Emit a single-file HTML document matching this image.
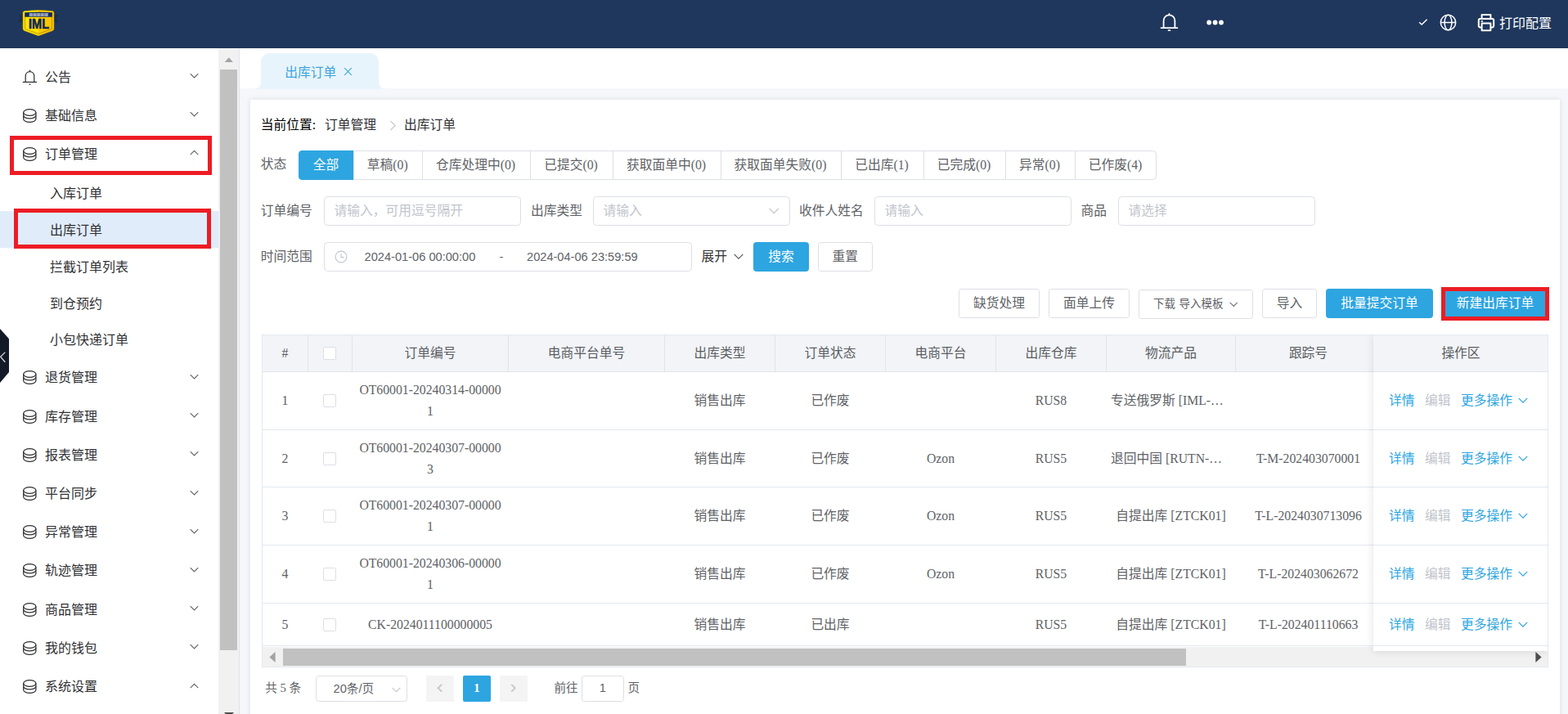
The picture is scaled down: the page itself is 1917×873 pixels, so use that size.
<!DOCTYPE html>
<html lang="zh-CN">
<head>
<meta charset="utf-8">
<title>出库订单</title>
<style>
*{box-sizing:border-box;margin:0;padding:0}
html,body{width:1917px;height:873px;overflow:hidden;background:#f5f7fa}
body{position:relative;font-family:"Liberation Serif",sans-serif;font-size:16px;color:#303133}
.abs{position:absolute}
.sans{font-family:"Liberation Sans",sans-serif}
/* header */
#hdr{left:0;top:0;width:1917px;height:59px;background:#1f375d}
#hdr .t{color:#fff;font-size:16px;line-height:20px;margin-top:1.5px;white-space:nowrap}
/* sidebar */
#side{left:0;top:59px;width:267px;height:814px;background:#fff}
.mi{position:absolute;left:0;width:267px;height:47.2px;line-height:47.2px;font-size:16px;color:#303133;white-space:nowrap}
.mi .ic{position:absolute;left:27px;top:14px;width:19px;height:19px}
.mi .tx{position:absolute;left:55px;top:0}
.mi .ar{position:absolute;left:232px;top:18.5px;width:11px;height:7.4px}
.smi{position:absolute;left:0;width:267px;height:44.75px;line-height:47.75px;font-size:16px;color:#303133;padding-left:61px;white-space:nowrap}
.smi.on{background:#e1ecfb}
.red{position:absolute;border:5px solid #ed1c24}
/* scrollbar */
#sb{left:267px;top:60px;width:26px;height:813px;background:#f1f1f1;border-right:1px solid #dde2ec}
/* main */
#tabs{left:293px;top:59px;width:1624px;height:49px;background:#fff}
#tab{left:319px;top:65px;width:143.5px;height:43.5px;background:#e8f4fc;border-radius:11px 11px 0 0;color:#3aa5dd;font-size:15.75px;line-height:44px;white-space:nowrap}
#card{left:306px;top:122px;width:1601px;height:760px;background:#fff;box-shadow:0 0 7px rgba(0,0,0,.10)}
.lbl{position:absolute;font-size:15.75px;line-height:20px;color:#303133;white-space:nowrap}
.inp{position:absolute;height:36px;border:1px solid #dcdfe6;border-radius:4.5px;background:#fff;font-size:15.75px;line-height:34px;color:#c0c4cc;padding-left:11.5px;white-space:nowrap}
.btn{position:absolute;height:36px;border:1px solid #dcdfe6;border-radius:3.4px;background:#fff;font-size:15.75px;line-height:34px;color:#606266;text-align:center;white-space:nowrap}
.btn.pri{background:#2da5e0;border-color:#2da5e0;color:#fff}
/* status group */
#sg{left:365px;top:184px;height:36px;width:1049px}
#sg div{position:absolute;top:0;height:36px;line-height:34.5px;font-size:15.75px;color:#606266;border:1px solid #dcdfe6;border-right:none;background:#fff;text-align:center;white-space:nowrap;padding-right:1px}
#sg div:first-child{border-color:#2da5e0;background:#2da5e0;color:#fff;border-radius:4.5px 0 0 4.5px}
#sg div:last-child{border-right:1px solid #dcdfe6;border-radius:0 4.5px 4.5px 0;padding-right:0}
/* table */
#tbl{left:320px;top:409px;width:1573px;height:407px;background:#fff;overflow:hidden;border:1px solid #e3e8f0}
.th{position:absolute;top:0;height:45px;line-height:44px;background:#f2f4f7;color:#5a5d63;font-size:15.75px;text-align:center;border-right:1px solid #dfe4ed;border-bottom:1px solid #dfe4ed;white-space:nowrap}
.tr{position:absolute;left:0;width:1573px;border-bottom:1px solid #e1e8f1}
.td{position:absolute;top:0;height:100%;display:flex;align-items:center;justify-content:center;text-align:center;color:#606266;font-size:15.75px;line-height:25.9px;white-space:nowrap}
.cb{display:block;position:relative;left:-1px;width:16px;height:16px;border:1px solid #dcdfe6;border-radius:2px;background:#fff}
.lnk{color:#2da5e0}.dis{color:#c0c4cc}
#fix{left:1358px;top:0;width:214px;height:386px;background:#fff;box-shadow:0 0 10px rgba(0,0,0,.12);z-index:2}
.pg{position:absolute;top:826px;height:32px;font-size:14.625px;line-height:31px;color:#606266;white-space:nowrap}
.c{display:inline-block;white-space:nowrap;vertical-align:baseline;font-family:"Liberation Sans","Noto Sans CJK SC",sans-serif}
</style>
</head>
<body>
<div id="hdr" class="abs">
<svg class="abs" style="left:20px;top:8px" width="54" height="40" viewBox="0 0 54 40">
<defs><linearGradient id="lg" x1="0" x2="1" y1="0" y2="0"><stop offset="0" stop-color="#ffe500"/><stop offset=".5" stop-color="#ffe200"/><stop offset=".5" stop-color="#ffcb05"/><stop offset="1" stop-color="#fdc400"/></linearGradient></defs>
<path d="M3 9.9 L8 9.9 L8 18.9 L3 18.9 L5 14.4 Z" fill="#182c52"/>
<path d="M51 9.9 L46 9.9 L46 18.9 L51 18.9 L49 14.4 Z" fill="#182c52"/>
<path d="M10 5.6 Q27 3.6 44 5.6 Q45.9 5.9 45.9 7.8 L45.9 27 Q45.9 28.8 44.2 29.5 L27 35.7 L9.8 29.5 Q8.1 28.8 8.1 27 L8.1 7.8 Q8.1 5.9 10 5.6 Z" fill="url(#lg)" stroke="#e3b000" stroke-width=".6"/>
<path d="M10.6 12.7 L10.6 27.4 L27 33.3 L43.4 27.4 L43.4 12.7" fill="none" stroke="#7a6200" stroke-width=".7" opacity=".75"/>
<path d="M10.2 7.3 Q27 6.2 43.9 7.3 L43.9 12.8 L10.2 12.8 Z" fill="#132957"/>
<rect x="15.8" y="8.2" width="23" height="3.6" fill="#e9ecf4" opacity=".8"/>
<path d="M20.3 8 v4 M24.9 8 v4 M29.4 8 v4 M34 8 v4 M16 10 h23" stroke="#132957" stroke-width=".7" opacity=".7"/>
<text x="15" y="26.9" font-family="Liberation Sans, sans-serif" font-weight="700" font-size="16.7" fill="#0e2553" stroke="#0e2553" stroke-width=".6" textLength="25" lengthAdjust="spacingAndGlyphs">IML</text>
</svg>
<svg class="abs" style="left:1417px;top:15px" width="25" height="25" viewBox="0 0 25 25" fill="none" stroke="#fff" stroke-width="1.8" stroke-linecap="round" stroke-linejoin="round">
<path d="M5.6 19 L5.6 10.4 C5.6 6.2 8.6 3.4 12.5 3.4 C16.4 3.4 19.4 6.2 19.4 10.4 L19.4 19"/>
<path d="M2.6 19.2 L22.4 19.2"/>
<path d="M12.5 2 L12.5 3.2"/>
<path d="M11.6 22.2 L13.4 22.2"/>
</svg>
<svg class="abs" style="left:1474px;top:23px" width="24" height="9" viewBox="0 0 24 9" fill="#fff">
<circle cx="4.2" cy="4.5" r="2.9"/><circle cx="11.6" cy="4.5" r="2.9"/><circle cx="19" cy="4.5" r="2.9"/>
</svg>
<svg class="abs" style="left:1734px;top:22px" width="12" height="10" viewBox="0 0 12 10" fill="none" stroke="#fff" stroke-width="1.5">
<path d="M1.2 5.2 L4.2 8 L10.6 1.8"/>
</svg>
<svg class="abs" style="left:1759px;top:16px" width="23" height="23" viewBox="0 0 23 23" fill="none" stroke="#fff" stroke-width="1.5">
<circle cx="11.5" cy="11.5" r="9.2"/>
<ellipse cx="11.5" cy="11.5" rx="4.4" ry="9.2"/>
<path d="M2.3 11.5 L20.7 11.5"/>
</svg>
<svg class="abs" style="left:1805px;top:15px" width="24" height="25" viewBox="0 0 24 25" fill="none" stroke="#fff" stroke-width="2" stroke-linejoin="round">
<path d="M6.6 8 L6.6 3 L17.4 3 L17.4 8"/>
<path d="M6.4 18.4 L4.6 18.4 Q2.8 18.4 2.8 16.6 L2.8 9.8 Q2.8 8 4.6 8 L19.4 8 Q21.2 8 21.2 9.8 L21.2 16.6 Q21.2 18.4 19.4 18.4 L17.6 18.4"/>
<rect x="6.6" y="13.6" width="10.8" height="8.6"/>
<path d="M5.6 11 L8 11" stroke-width="1.6"/>
</svg>
<div class="abs t" style="left:1833px;top:17px"><span class="c" style="width:4em">打印配置</span></div>
</div>
<div id="side" class="abs">
<div class="mi" style="top:11.8px"><svg class="ic" viewBox="0 0 19 19" fill="none" stroke="#303133" stroke-width="1.25" stroke-linecap="round"><path d="M4.2 15.2 L4.2 8.2 C4.2 4.8 6.5 2.6 9.5 2.6 C12.5 2.6 14.8 4.8 14.8 8.2 L14.8 15.2"/><path d="M1.4 15.4 L17.6 15.4"/><path d="M9.5 1.2 L9.5 2.4"/><path d="M8.9 18 L10.1 18"/></svg><span class="tx"><span class="c" style="width:2em">公告</span></span><svg class="ar" viewBox="0 0 12 8" fill="none" stroke="#606266" stroke-width="1.2"><path d="M0.8 1.2 L6 6.4 L11.2 1.2"/></svg></div>
<div class="mi" style="top:58.8px"><svg class="ic" viewBox="0 0 19 19" fill="none" stroke="#303133" stroke-width="1.25"><ellipse cx="9.3" cy="5.5" rx="7.6" ry="3.9"/><path d="M1.7 5.5 L1.7 9.2 C1.7 11.3 5.1 12.9 9.3 12.9 C13.5 12.9 16.9 11.3 16.9 9.2 L16.9 5.5"/><path d="M1.7 9.2 L1.7 13.5 C1.7 15.6 5.1 17.3 9.3 17.3 C13.5 17.3 16.9 15.6 16.9 13.5 L16.9 9.2"/></svg><span class="tx"><span class="c" style="width:4em">基础信息</span></span><svg class="ar" viewBox="0 0 12 8" fill="none" stroke="#606266" stroke-width="1.2"><path d="M0.8 1.2 L6 6.4 L11.2 1.2"/></svg></div>
<div class="mi" style="top:105.6px"><svg class="ic" viewBox="0 0 19 19" fill="none" stroke="#303133" stroke-width="1.25"><ellipse cx="9.3" cy="5.5" rx="7.6" ry="3.9"/><path d="M1.7 5.5 L1.7 9.2 C1.7 11.3 5.1 12.9 9.3 12.9 C13.5 12.9 16.9 11.3 16.9 9.2 L16.9 5.5"/><path d="M1.7 9.2 L1.7 13.5 C1.7 15.6 5.1 17.3 9.3 17.3 C13.5 17.3 16.9 15.6 16.9 13.5 L16.9 9.2"/></svg><span class="tx"><span class="c" style="width:4em">订单管理</span></span><svg class="ar" viewBox="0 0 12 8" fill="none" stroke="#606266" stroke-width="1.2"><path d="M0.8 6.6 L6 1.4 L11.2 6.6"/></svg></div>
<div class="mi" style="top:379.4px"><svg class="ic" viewBox="0 0 19 19" fill="none" stroke="#303133" stroke-width="1.25"><ellipse cx="9.3" cy="5.5" rx="7.6" ry="3.9"/><path d="M1.7 5.5 L1.7 9.2 C1.7 11.3 5.1 12.9 9.3 12.9 C13.5 12.9 16.9 11.3 16.9 9.2 L16.9 5.5"/><path d="M1.7 9.2 L1.7 13.5 C1.7 15.6 5.1 17.3 9.3 17.3 C13.5 17.3 16.9 15.6 16.9 13.5 L16.9 9.2"/></svg><span class="tx"><span class="c" style="width:4em">退货管理</span></span><svg class="ar" viewBox="0 0 12 8" fill="none" stroke="#606266" stroke-width="1.2"><path d="M0.8 1.2 L6 6.4 L11.2 1.2"/></svg></div>
<div class="mi" style="top:426.6px"><svg class="ic" viewBox="0 0 19 19" fill="none" stroke="#303133" stroke-width="1.25"><ellipse cx="9.3" cy="5.5" rx="7.6" ry="3.9"/><path d="M1.7 5.5 L1.7 9.2 C1.7 11.3 5.1 12.9 9.3 12.9 C13.5 12.9 16.9 11.3 16.9 9.2 L16.9 5.5"/><path d="M1.7 9.2 L1.7 13.5 C1.7 15.6 5.1 17.3 9.3 17.3 C13.5 17.3 16.9 15.6 16.9 13.5 L16.9 9.2"/></svg><span class="tx"><span class="c" style="width:4em">库存管理</span></span><svg class="ar" viewBox="0 0 12 8" fill="none" stroke="#606266" stroke-width="1.2"><path d="M0.8 1.2 L6 6.4 L11.2 1.2"/></svg></div>
<div class="mi" style="top:473.8px"><svg class="ic" viewBox="0 0 19 19" fill="none" stroke="#303133" stroke-width="1.25"><ellipse cx="9.3" cy="5.5" rx="7.6" ry="3.9"/><path d="M1.7 5.5 L1.7 9.2 C1.7 11.3 5.1 12.9 9.3 12.9 C13.5 12.9 16.9 11.3 16.9 9.2 L16.9 5.5"/><path d="M1.7 9.2 L1.7 13.5 C1.7 15.6 5.1 17.3 9.3 17.3 C13.5 17.3 16.9 15.6 16.9 13.5 L16.9 9.2"/></svg><span class="tx"><span class="c" style="width:4em">报表管理</span></span><svg class="ar" viewBox="0 0 12 8" fill="none" stroke="#606266" stroke-width="1.2"><path d="M0.8 1.2 L6 6.4 L11.2 1.2"/></svg></div>
<div class="mi" style="top:521.0px"><svg class="ic" viewBox="0 0 19 19" fill="none" stroke="#303133" stroke-width="1.25"><ellipse cx="9.3" cy="5.5" rx="7.6" ry="3.9"/><path d="M1.7 5.5 L1.7 9.2 C1.7 11.3 5.1 12.9 9.3 12.9 C13.5 12.9 16.9 11.3 16.9 9.2 L16.9 5.5"/><path d="M1.7 9.2 L1.7 13.5 C1.7 15.6 5.1 17.3 9.3 17.3 C13.5 17.3 16.9 15.6 16.9 13.5 L16.9 9.2"/></svg><span class="tx"><span class="c" style="width:4em">平台同步</span></span><svg class="ar" viewBox="0 0 12 8" fill="none" stroke="#606266" stroke-width="1.2"><path d="M0.8 1.2 L6 6.4 L11.2 1.2"/></svg></div>
<div class="mi" style="top:568.2px"><svg class="ic" viewBox="0 0 19 19" fill="none" stroke="#303133" stroke-width="1.25"><ellipse cx="9.3" cy="5.5" rx="7.6" ry="3.9"/><path d="M1.7 5.5 L1.7 9.2 C1.7 11.3 5.1 12.9 9.3 12.9 C13.5 12.9 16.9 11.3 16.9 9.2 L16.9 5.5"/><path d="M1.7 9.2 L1.7 13.5 C1.7 15.6 5.1 17.3 9.3 17.3 C13.5 17.3 16.9 15.6 16.9 13.5 L16.9 9.2"/></svg><span class="tx"><span class="c" style="width:4em">异常管理</span></span><svg class="ar" viewBox="0 0 12 8" fill="none" stroke="#606266" stroke-width="1.2"><path d="M0.8 1.2 L6 6.4 L11.2 1.2"/></svg></div>
<div class="mi" style="top:615.4px"><svg class="ic" viewBox="0 0 19 19" fill="none" stroke="#303133" stroke-width="1.25"><ellipse cx="9.3" cy="5.5" rx="7.6" ry="3.9"/><path d="M1.7 5.5 L1.7 9.2 C1.7 11.3 5.1 12.9 9.3 12.9 C13.5 12.9 16.9 11.3 16.9 9.2 L16.9 5.5"/><path d="M1.7 9.2 L1.7 13.5 C1.7 15.6 5.1 17.3 9.3 17.3 C13.5 17.3 16.9 15.6 16.9 13.5 L16.9 9.2"/></svg><span class="tx"><span class="c" style="width:4em">轨迹管理</span></span><svg class="ar" viewBox="0 0 12 8" fill="none" stroke="#606266" stroke-width="1.2"><path d="M0.8 1.2 L6 6.4 L11.2 1.2"/></svg></div>
<div class="mi" style="top:662.6px"><svg class="ic" viewBox="0 0 19 19" fill="none" stroke="#303133" stroke-width="1.25"><ellipse cx="9.3" cy="5.5" rx="7.6" ry="3.9"/><path d="M1.7 5.5 L1.7 9.2 C1.7 11.3 5.1 12.9 9.3 12.9 C13.5 12.9 16.9 11.3 16.9 9.2 L16.9 5.5"/><path d="M1.7 9.2 L1.7 13.5 C1.7 15.6 5.1 17.3 9.3 17.3 C13.5 17.3 16.9 15.6 16.9 13.5 L16.9 9.2"/></svg><span class="tx"><span class="c" style="width:4em">商品管理</span></span><svg class="ar" viewBox="0 0 12 8" fill="none" stroke="#606266" stroke-width="1.2"><path d="M0.8 1.2 L6 6.4 L11.2 1.2"/></svg></div>
<div class="mi" style="top:709.8px"><svg class="ic" viewBox="0 0 19 19" fill="none" stroke="#303133" stroke-width="1.25"><ellipse cx="9.3" cy="5.5" rx="7.6" ry="3.9"/><path d="M1.7 5.5 L1.7 9.2 C1.7 11.3 5.1 12.9 9.3 12.9 C13.5 12.9 16.9 11.3 16.9 9.2 L16.9 5.5"/><path d="M1.7 9.2 L1.7 13.5 C1.7 15.6 5.1 17.3 9.3 17.3 C13.5 17.3 16.9 15.6 16.9 13.5 L16.9 9.2"/></svg><span class="tx"><span class="c" style="width:4em">我的钱包</span></span><svg class="ar" viewBox="0 0 12 8" fill="none" stroke="#606266" stroke-width="1.2"><path d="M0.8 1.2 L6 6.4 L11.2 1.2"/></svg></div>
<div class="mi" style="top:757.0px"><svg class="ic" viewBox="0 0 19 19" fill="none" stroke="#303133" stroke-width="1.25"><ellipse cx="9.3" cy="5.5" rx="7.6" ry="3.9"/><path d="M1.7 5.5 L1.7 9.2 C1.7 11.3 5.1 12.9 9.3 12.9 C13.5 12.9 16.9 11.3 16.9 9.2 L16.9 5.5"/><path d="M1.7 9.2 L1.7 13.5 C1.7 15.6 5.1 17.3 9.3 17.3 C13.5 17.3 16.9 15.6 16.9 13.5 L16.9 9.2"/></svg><span class="tx"><span class="c" style="width:4em">系统设置</span></span><svg class="ar" viewBox="0 0 12 8" fill="none" stroke="#606266" stroke-width="1.2"><path d="M0.8 6.6 L6 1.4 L11.2 6.6"/></svg></div>
<div class="smi" style="top:154.4px"><span class="c" style="width:4em">入库订单</span></div>
<div class="smi on" style="top:199.2px"><span class="c" style="width:4em">出库订单</span></div>
<div class="smi" style="top:243.9px"><span class="c" style="width:6em">拦截订单列表</span></div>
<div class="smi" style="top:288.7px"><span class="c" style="width:4em">到仓预约</span></div>
<div class="smi" style="top:333.4px"><span class="c" style="width:6em">小包快递订单</span></div>
<div class="red" style="left:12px;top:107px;width:247px;height:48px"></div>
<div class="red" style="left:17px;top:196px;width:241px;height:49px"></div>
<svg class="abs" style="left:0;top:342px" width="12" height="70" viewBox="0 0 12 70"><path d="M0 1 L11 13.3 L11 54.1 L0 66.9 Z" fill="#131a27"/><path d="M6.3 29.6 L0.6 35.3 L6.3 41.8" fill="none" stroke="#d6d9df" stroke-width="1.3"/></svg>
</div>
<div id="sb" class="abs">
<svg class="abs" style="left:6.7px;top:9.8px" width="11.6" height="6.4" viewBox="0 0 12 7"><path d="M0 7 L6 0.4 L12 7 Z" fill="#a3a3a3"/></svg>
<div class="abs" style="left:2px;top:25px;width:21px;height:710px;background:#c1c1c1"></div>
<svg class="abs" style="left:6.5px;top:811px" width="12" height="7" viewBox="0 0 12 7"><path d="M0 0 L6 6.6 L12 0 Z" fill="#505050"/></svg>
</div>
<div id="tabs" class="abs"></div>
<div id="tab" class="abs"><span class="abs" style="left:29.2px;top:1.5px"><span class="c" style="width:4em">出库订单</span></span>
<svg class="abs" style="left:100.5px;top:17px" width="11" height="11" viewBox="0 0 11 11" fill="none" stroke="#3aa5dd" stroke-width="1.1"><path d="M1.2 1.2 L9.8 9.8 M9.8 1.2 L1.2 9.8"/></svg>
<svg class="abs" style="left:-9px;top:33.5px" width="9" height="10" viewBox="0 0 9 10"><path d="M9 0 L9 10 L0 10 C6 9.6 9 6.5 9 0 Z" fill="#e8f4fc"/></svg>
<svg class="abs" style="left:143.5px;top:33.5px" width="9" height="10" viewBox="0 0 9 10"><path d="M0 0 L0 10 L9 10 C3 9.6 0 6.5 0 0 Z" fill="#e8f4fc"/></svg>
</div>
<div id="card" class="abs"></div>
<div class="lbl" style="left:318.8px;top:143px;color:#000"><span class="c" style="width:4em">当前位置</span>:</div>
<div class="lbl" style="left:397px;top:143px;color:#303133"><span class="c" style="width:4em">订单管理</span></div>
<svg class="abs" style="left:476px;top:146.5px" width="9" height="13" viewBox="0 0 9 13" fill="none" stroke="#c0c4cc" stroke-width="1.1"><path d="M1.4 0.8 L7.2 6.5 L1.4 12.2"/></svg>
<div class="lbl" style="left:494px;top:143px;color:#303133"><span class="c" style="width:4em">出库订单</span></div>
<div class="lbl" style="left:318.8px;top:191px;color:#606266"><span class="c" style="width:2em">状态</span></div>
<div id="sg" class="abs"><div style="left:0.0px;width:67.0px"><span class="c" style="width:2em">全部</span></div><div style="left:67.0px;width:83.5px"><span class="c" style="width:2em">草稿</span>(0)</div><div style="left:150.5px;width:132.0px"><span class="c" style="width:5em">仓库处理中</span>(0)</div><div style="left:282.5px;width:101.0px"><span class="c" style="width:3em">已提交</span>(0)</div><div style="left:383.5px;width:132.0px"><span class="c" style="width:5em">获取面单中</span>(0)</div><div style="left:515.5px;width:147.0px"><span class="c" style="width:6em">获取面单失败</span>(0)</div><div style="left:662.5px;width:101.0px"><span class="c" style="width:3em">已出库</span>(1)</div><div style="left:763.5px;width:100.0px"><span class="c" style="width:3em">已完成</span>(0)</div><div style="left:863.5px;width:85.0px"><span class="c" style="width:2em">异常</span>(0)</div><div style="left:948.5px;width:100.0px"><span class="c" style="width:3em">已作废</span>(4)</div></div>
<div class="lbl" style="left:318.8px;top:247.5px;color:#606266"><span class="c" style="width:4em">订单编号</span></div>
<div class="lbl" style="left:649px;top:247.5px;color:#606266"><span class="c" style="width:4em">出库类型</span></div>
<div class="lbl" style="left:977px;top:247.5px;color:#606266"><span class="c" style="width:5em">收件人姓名</span></div>
<div class="lbl" style="left:1321.5px;top:247.5px;color:#606266"><span class="c" style="width:2em">商品</span></div>
<div class="inp" style="left:396px;top:240px;width:240.6px"><span class="c" style="width:10em">请输入，可用逗号隔开</span></div>
<div class="inp" style="left:725px;top:240px;width:240.8px"><span class="c" style="width:3em">请输入</span></div>
<div class="inp" style="left:1069px;top:240px;width:240.5px"><span class="c" style="width:3em">请输入</span></div>
<div class="inp" style="left:1367px;top:240px;width:240.5px"><span class="c" style="width:3em">请选择</span></div>
<div class="abs" style="left:940px;top:254px;line-height:0"><svg width="12.5" height="8" viewBox="0 0 11 7" fill="none" stroke="#c0c4cc" stroke-width="1.1"><path d="M0.6 0.8 L5.5 5.8 L10.4 0.8"/></svg></div>
<div class="lbl" style="left:318.8px;top:303.5px;color:#606266"><span class="c" style="width:4em">时间范围</span></div>
<div class="inp sans" style="left:396px;top:296px;width:449.5px;padding:0;color:#606266;font-size:14.625px">
<svg class="abs" style="left:11.5px;top:9.3px" width="16" height="16" viewBox="0 0 16 16" fill="none" stroke="#c0c4cc" stroke-width="1.1"><circle cx="8" cy="8" r="6.9"/><path d="M8 4.2 L8 8.6 L11.6 8.6"/></svg>
<span class="abs" style="left:48.6px;top:0">2024-01-06 00:00:00</span>
<span class="abs" style="left:213.5px;top:0">-</span>
<span class="abs" style="left:247px;top:0">2024-04-06 23:59:59</span>
</div>
<div class="lbl" style="left:857.5px;top:303.5px;color:#303133"><span class="c" style="width:2em">展开</span></div>
<div class="abs" style="left:896.5px;top:310px;line-height:0"><svg width="12" height="7.6" viewBox="0 0 11 7" fill="none" stroke="#45484f" stroke-width="1"><path d="M0.6 0.8 L5.5 5.8 L10.4 0.8"/></svg></div>
<div class="btn pri" style="left:921px;top:296px;width:68px"><span class="c" style="width:2em">搜索</span></div>
<div class="btn" style="left:1000px;top:296px;width:66.5px"><span class="c" style="width:2em">重置</span></div>
<div class="btn" style="left:1172px;top:353px;width:99px"><span class="c" style="width:4em">缺货处理</span></div>
<div class="btn" style="left:1282px;top:353px;width:99px"><span class="c" style="width:4em">面单上传</span></div>
<div class="btn" style="left:1392px;top:354px;width:140px;font-size:13.5px;text-align:left;padding-left:17px;word-spacing:1.2px"><span class="c" style="width:2em">下载</span> <span class="c" style="width:4em">导入模板</span><span class="abs" style="left:109.5px;top:13.5px;line-height:0"><svg width="10.5" height="6.6" viewBox="0 0 11 7" fill="none" stroke="#606266" stroke-width="1.1"><path d="M0.6 0.8 L5.5 5.8 L10.4 0.8"/></svg></span></div>
<div class="btn" style="left:1543px;top:353px;width:67px"><span class="c" style="width:2em">导入</span></div>
<div class="btn pri" style="left:1621px;top:353px;width:131px"><span class="c" style="width:6em">批量提交订单</span></div>
<div class="btn pri" style="left:1766px;top:353px;width:124px;border-radius:0"><span class="c" style="width:6em">新建出库订单</span></div>
<div class="red" style="left:1762px;top:351px;width:132px;height:41px"></div>
<!--T0--><div id="tbl" class="abs">
<div class="th" style="left:0px;width:56px">#</div><div class="th" style="left:56px;width:54px"><span class="cb" style="display:inline-block;vertical-align:middle;margin-top:-3px"></span></div><div class="th" style="left:110px;width:191px"><span class="c" style="width:4em">订单编号</span></div><div class="th" style="left:301px;width:191px"><span class="c" style="width:6em">电商平台单号</span></div><div class="th" style="left:492px;width:135px"><span class="c" style="width:4em">出库类型</span></div><div class="th" style="left:627px;width:135px"><span class="c" style="width:4em">订单状态</span></div><div class="th" style="left:762px;width:135px"><span class="c" style="width:4em">电商平台</span></div><div class="th" style="left:897px;width:135px"><span class="c" style="width:4em">出库仓库</span></div><div class="th" style="left:1032px;width:158px"><span class="c" style="width:4em">物流产品</span></div><div class="th" style="left:1190px;width:178px"><span class="c" style="width:3em">跟踪号</span></div>
<div class="tr" style="top:45px;height:71px"><div class="td" style="left:0px;width:55px"><div>1</div></div><div class="td" style="left:56px;width:53px"><div><span class="cb"></span></div></div><div class="td" style="left:110px;width:190px"><div>OT60001-20240314-00000<br>1</div></div><div class="td" style="left:301px;width:190px"><div></div></div><div class="td" style="left:492px;width:134px"><div><span class="c" style="width:4em">销售出库</span></div></div><div class="td" style="left:627px;width:134px"><div><span class="c" style="width:3em">已作废</span></div></div><div class="td" style="left:762px;width:134px"><div></div></div><div class="td" style="left:897px;width:134px"><div>RUS8</div></div><div class="td" style="left:1032px;width:157px;justify-content:flex-start;padding-left:5px"><div><span class="c" style="width:5em">专送俄罗斯</span> [IML-…</div></div><div class="td" style="left:1190px;width:177px"><div></div></div></div>
<div class="tr" style="top:116px;height:70px"><div class="td" style="left:0px;width:55px"><div>2</div></div><div class="td" style="left:56px;width:53px"><div><span class="cb"></span></div></div><div class="td" style="left:110px;width:190px"><div>OT60001-20240307-00000<br>3</div></div><div class="td" style="left:301px;width:190px"><div></div></div><div class="td" style="left:492px;width:134px"><div><span class="c" style="width:4em">销售出库</span></div></div><div class="td" style="left:627px;width:134px"><div><span class="c" style="width:3em">已作废</span></div></div><div class="td" style="left:762px;width:134px"><div>Ozon</div></div><div class="td" style="left:897px;width:134px"><div>RUS5</div></div><div class="td" style="left:1032px;width:157px;justify-content:flex-start;padding-left:5px"><div><span class="c" style="width:4em">退回中国</span> [RUTN-…</div></div><div class="td" style="left:1190px;width:177px"><div>T-M-202403070001</div></div></div>
<div class="tr" style="top:186px;height:71px"><div class="td" style="left:0px;width:55px"><div>3</div></div><div class="td" style="left:56px;width:53px"><div><span class="cb"></span></div></div><div class="td" style="left:110px;width:190px"><div>OT60001-20240307-00000<br>1</div></div><div class="td" style="left:301px;width:190px"><div></div></div><div class="td" style="left:492px;width:134px"><div><span class="c" style="width:4em">销售出库</span></div></div><div class="td" style="left:627px;width:134px"><div><span class="c" style="width:3em">已作废</span></div></div><div class="td" style="left:762px;width:134px"><div>Ozon</div></div><div class="td" style="left:897px;width:134px"><div>RUS5</div></div><div class="td" style="left:1032px;width:157px"><div><span class="c" style="width:4em">自提出库</span> [ZTCK01]</div></div><div class="td" style="left:1190px;width:177px"><div>T-L-2024030713096</div></div></div>
<div class="tr" style="top:257px;height:71px"><div class="td" style="left:0px;width:55px"><div>4</div></div><div class="td" style="left:56px;width:53px"><div><span class="cb"></span></div></div><div class="td" style="left:110px;width:190px"><div>OT60001-20240306-00000<br>1</div></div><div class="td" style="left:301px;width:190px"><div></div></div><div class="td" style="left:492px;width:134px"><div><span class="c" style="width:4em">销售出库</span></div></div><div class="td" style="left:627px;width:134px"><div><span class="c" style="width:3em">已作废</span></div></div><div class="td" style="left:762px;width:134px"><div>Ozon</div></div><div class="td" style="left:897px;width:134px"><div>RUS5</div></div><div class="td" style="left:1032px;width:157px"><div><span class="c" style="width:4em">自提出库</span> [ZTCK01]</div></div><div class="td" style="left:1190px;width:177px"><div>T-L-202403062672</div></div></div>
<div class="tr" style="top:328px;height:52px"><div class="td" style="left:0px;width:55px"><div>5</div></div><div class="td" style="left:56px;width:53px"><div><span class="cb"></span></div></div><div class="td" style="left:110px;width:190px"><div>CK-2024011100000005</div></div><div class="td" style="left:301px;width:190px"><div></div></div><div class="td" style="left:492px;width:134px"><div><span class="c" style="width:4em">销售出库</span></div></div><div class="td" style="left:627px;width:134px"><div><span class="c" style="width:3em">已出库</span></div></div><div class="td" style="left:762px;width:134px"><div></div></div><div class="td" style="left:897px;width:134px"><div>RUS5</div></div><div class="td" style="left:1032px;width:157px"><div><span class="c" style="width:4em">自提出库</span> [ZTCK01]</div></div><div class="td" style="left:1190px;width:177px"><div>T-L-202401110663</div></div></div>
<div id="fix" class="abs" style="left:1358px"><div class="th" style="left:0;width:214px;border-right:none"><span class="c" style="width:3em">操作区</span></div><div class="tr" style="top:45px;height:71px;width:214px"><div class="td" style="left:0;width:214px;justify-content:flex-start;padding-left:19px"><span class="lnk"><span class="c" style="width:2em">详情</span></span><span class="dis" style="margin-left:12.5px"><span class="c" style="width:2em">编辑</span></span><span class="lnk" style="margin-left:12.5px"><span class="c" style="width:4em">更多操作</span></span><svg style="margin-left:7.3px" width="12" height="7.5" viewBox="0 0 11 7" fill="none" stroke="#2da5e0" stroke-width="1.1"><path d="M0.6 0.8 L5.5 5.8 L10.4 0.8"/></svg></div></div><div class="tr" style="top:116px;height:70px;width:214px"><div class="td" style="left:0;width:214px;justify-content:flex-start;padding-left:19px"><span class="lnk"><span class="c" style="width:2em">详情</span></span><span class="dis" style="margin-left:12.5px"><span class="c" style="width:2em">编辑</span></span><span class="lnk" style="margin-left:12.5px"><span class="c" style="width:4em">更多操作</span></span><svg style="margin-left:7.3px" width="12" height="7.5" viewBox="0 0 11 7" fill="none" stroke="#2da5e0" stroke-width="1.1"><path d="M0.6 0.8 L5.5 5.8 L10.4 0.8"/></svg></div></div><div class="tr" style="top:186px;height:71px;width:214px"><div class="td" style="left:0;width:214px;justify-content:flex-start;padding-left:19px"><span class="lnk"><span class="c" style="width:2em">详情</span></span><span class="dis" style="margin-left:12.5px"><span class="c" style="width:2em">编辑</span></span><span class="lnk" style="margin-left:12.5px"><span class="c" style="width:4em">更多操作</span></span><svg style="margin-left:7.3px" width="12" height="7.5" viewBox="0 0 11 7" fill="none" stroke="#2da5e0" stroke-width="1.1"><path d="M0.6 0.8 L5.5 5.8 L10.4 0.8"/></svg></div></div><div class="tr" style="top:257px;height:71px;width:214px"><div class="td" style="left:0;width:214px;justify-content:flex-start;padding-left:19px"><span class="lnk"><span class="c" style="width:2em">详情</span></span><span class="dis" style="margin-left:12.5px"><span class="c" style="width:2em">编辑</span></span><span class="lnk" style="margin-left:12.5px"><span class="c" style="width:4em">更多操作</span></span><svg style="margin-left:7.3px" width="12" height="7.5" viewBox="0 0 11 7" fill="none" stroke="#2da5e0" stroke-width="1.1"><path d="M0.6 0.8 L5.5 5.8 L10.4 0.8"/></svg></div></div><div class="tr" style="top:328px;height:52px;width:214px"><div class="td" style="left:0;width:214px;justify-content:flex-start;padding-left:19px"><span class="lnk"><span class="c" style="width:2em">详情</span></span><span class="dis" style="margin-left:12.5px"><span class="c" style="width:2em">编辑</span></span><span class="lnk" style="margin-left:12.5px"><span class="c" style="width:4em">更多操作</span></span><svg style="margin-left:7.3px" width="12" height="7.5" viewBox="0 0 11 7" fill="none" stroke="#2da5e0" stroke-width="1.1"><path d="M0.6 0.8 L5.5 5.8 L10.4 0.8"/></svg></div></div></div>
<div class="abs" style="left:0;top:381px;width:1572px;height:24px;background:#f1f1f1">
<svg class="abs" style="left:8px;top:6px" width="8" height="13" viewBox="0 0 8 13"><path d="M7.6 0 L7.6 13 L0.4 6.5 Z" fill="#a3a3a3"/></svg>
<div class="abs" style="left:25px;top:2px;width:1104px;height:21px;background:#c1c1c1"></div>
<svg class="abs" style="left:1556px;top:6px" width="8" height="13" viewBox="0 0 8 13"><path d="M0.4 0 L0.4 13 L7.6 6.5 Z" fill="#505050"/></svg>
</div>
</div>
<!--T1-->
<div class="pg" style="left:324.3px"><span class="c" style="width:1em">共</span> 5 <span class="c" style="width:1em">条</span></div>
<div class="pg sans" style="left:386px;width:112px;border:1px solid #dcdfe6;border-radius:3.5px;background:#fff;line-height:30px"><span class="abs" style="left:20.5px;top:0">20<span class="c" style="width:1em">条</span>/<span class="c" style="width:1em">页</span></span><svg class="abs" style="left:91.5px;top:13px" width="11" height="7" viewBox="0 0 11 7" fill="none" stroke="#c0c4cc" stroke-width="1.1"><path d="M0.6 0.8 L5.5 5.8 L10.4 0.8"/></svg></div>
<div class="pg" style="left:521px;width:34px;background:#f4f4f5;border-radius:2px"><svg class="abs" style="left:12.8px;top:10px" width="7.4" height="10.6" viewBox="0 0 8 12" fill="none" stroke="#c0c4cc" stroke-width="1.9"><path d="M6.8 1 L1.6 6 L6.8 11"/></svg></div>
<div class="pg" style="left:566px;width:34px;background:#2da5e0;border-radius:2px;color:#fff;font-weight:700;text-align:center">1</div>
<div class="pg" style="left:611px;width:34px;background:#f4f4f5;border-radius:2px"><svg class="abs" style="left:13.2px;top:10px" width="7.4" height="10.6" viewBox="0 0 8 12" fill="none" stroke="#c0c4cc" stroke-width="1.9"><path d="M1.2 1 L6.4 6 L1.2 11"/></svg></div>
<div class="pg" style="left:677.5px"><span class="c" style="width:2em">前往</span></div>
<div class="pg sans" style="left:711px;width:51.5px;border:1px solid #dcdfe6;border-radius:3.5px;background:#fff;text-align:center;line-height:29px">1</div>
<div class="pg" style="left:767.5px"><span class="c" style="width:1em">页</span></div>

</body>
</html>
